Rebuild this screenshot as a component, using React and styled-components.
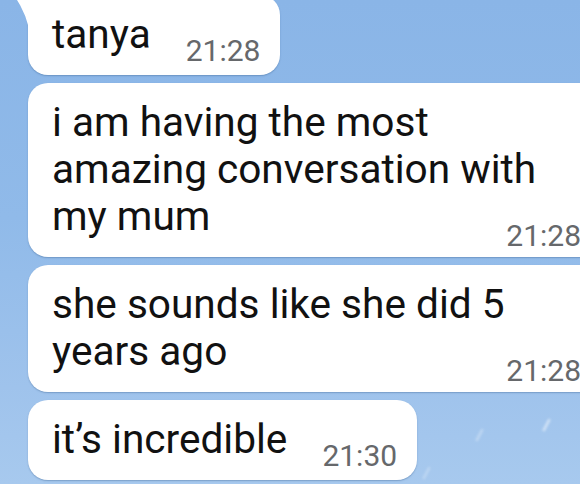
import React from "react";
import styled, { createGlobalStyle, css } from "styled-components";

const GlobalStyle = createGlobalStyle`
  html, body {
    margin: 0;
    padding: 0;
    overflow: hidden;
  }
  body {
    font-family: Roboto, "Noto Sans", "Liberation Sans", sans-serif;
  }
`;

const Screen = styled.div`
  position: relative;
  width: 580px;
  height: 484px;
  overflow: hidden;
  background: linear-gradient(180deg, #8ab5e7 0%, #90bae9 45%, #9fc3ec 80%, #a7c9ee 100%);
`;

const Drop = styled.span`
  position: absolute;
  width: 3px;
  height: 14px;
  border-radius: 2px;
  background: rgba(255, 255, 255, 0.45);
  filter: blur(1px);
  transform: rotate(28deg);
`;

const Feed = styled.div`
  display: flex;
  flex-direction: column;
  align-items: flex-start;
  gap: 8px;
  margin-top: -5px;
  padding-left: 28px;
`;

const Bubble = styled.div`
  position: relative;
  box-sizing: border-box;
  display: flex;
  flex-wrap: wrap;
  align-items: flex-end;
  padding: 16px 20px 17px 24px;
  background: #ffffff;
  border-radius: 20px;
  box-shadow: 0 1px 1.5px rgba(40, 80, 130, 0.35);
  width: ${(p) => (p.$wide ? "573px" : "auto")};

  ${(p) =>
    p.$first &&
    css`
      border-top-left-radius: 0;

      &::before {
        content: "";
        position: absolute;
        left: -14px;
        top: 0;
        width: 14px;
        height: 30px;
        background: #ffffff;
        clip-path: polygon(0 0, 100% 0, 100% 100%, 80% 70%, 45% 35%);
      }
    `}
`;

const Text = styled.div`
  font-size: 40.6px;
  line-height: 47px;
  color: #111111;
  white-space: ${(p) => (p.$stacked ? "normal" : "nowrap")};
  width: ${(p) => (p.$stacked ? "505px" : "auto")};
`;

const Time = styled.div`
  font-size: 30px;
  line-height: 30px;
  color: #66686b;
  white-space: nowrap;

  ${(p) =>
    p.$stacked
      ? css`
          margin: -19px 0 -11px auto;
        `
      : css`
          margin: 0 0 -8px 35px;
        `}
`;

const messages = [
  { text: "tanya", time: "21:28", first: true },
  {
    text: "i am having the most amazing conversation with my mum",
    time: "21:28",
    stacked: true,
  },
  { text: "she sounds like she did 5 years ago", time: "21:28", stacked: true },
  { text: "it\u2019s incredible", time: "21:30" },
];

const Message = ({ text, time, first, stacked }) => {
  return (
    <Bubble $first={first} $wide={stacked}>
      <Text $stacked={stacked}>{text}</Text>
      <Time $stacked={stacked}>{time}</Time>
    </Bubble>
  );
};

const App = () => {
  return (
    <>
      <GlobalStyle />
      <Screen>
        <Feed>
          {messages.map((m, i) => (
            <Message key={i} {...m} />
          ))}
        </Feed>
        <Drop style={{ left: 545, top: 418 }} />
        <Drop style={{ left: 478, top: 428, opacity: 0.6 }} />
        <Drop style={{ left: 425, top: 466, opacity: 0.5 }} />
      </Screen>
    </>
  );
};

export default App;
